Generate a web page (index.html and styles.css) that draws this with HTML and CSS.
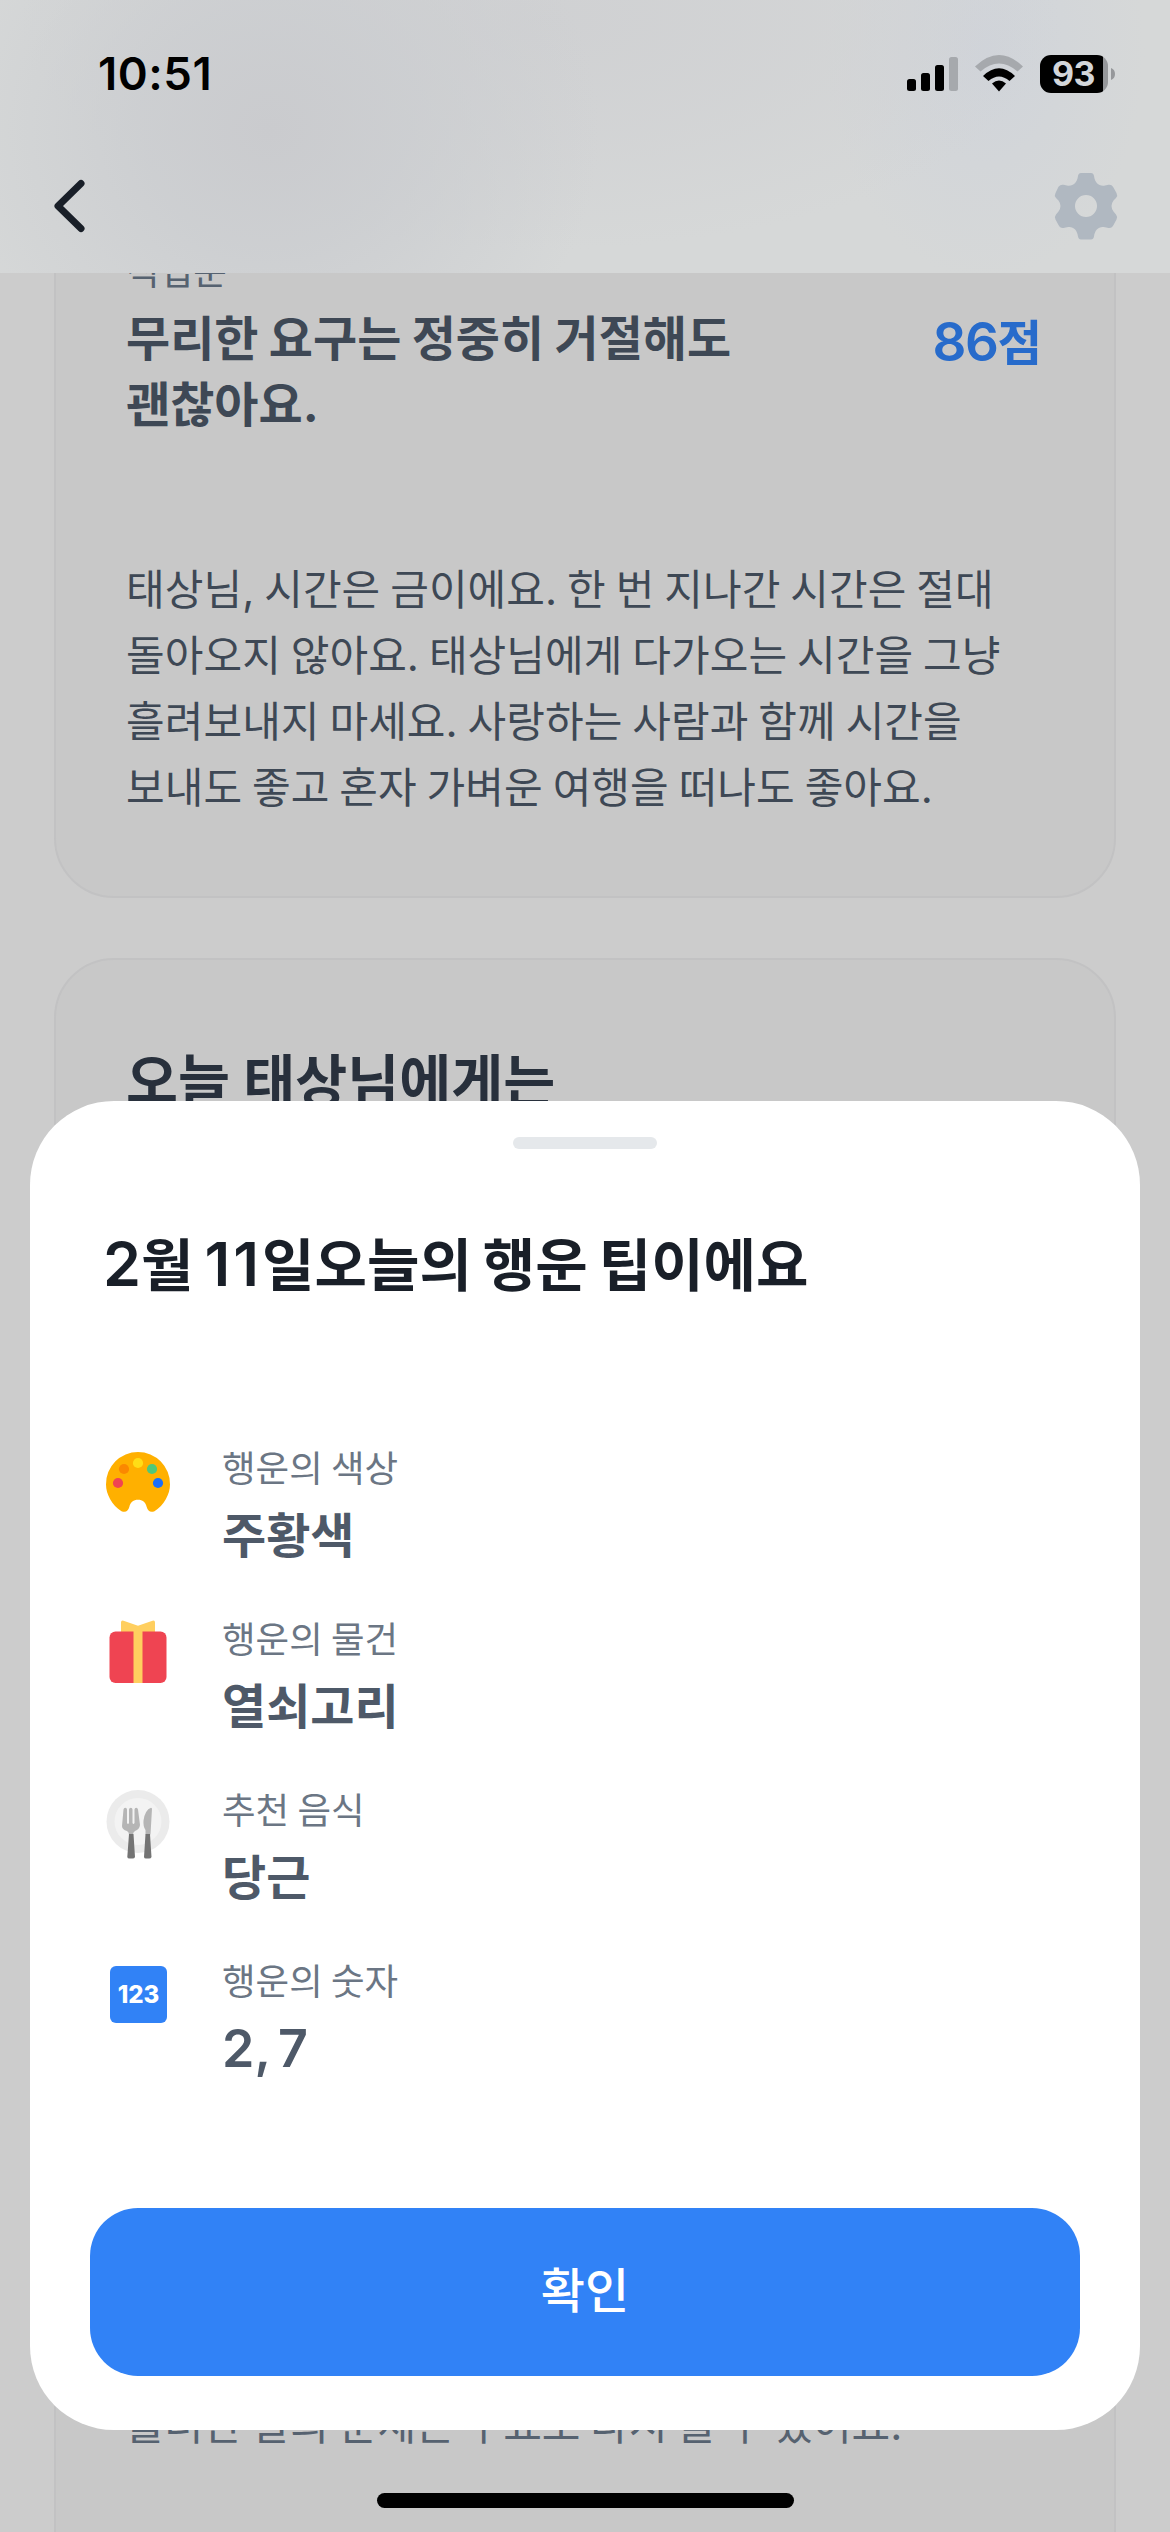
FILE: index.html
```html
<!DOCTYPE html>
<html lang="ko">
<head>
<meta charset="utf-8">
<title>오늘의 행운 팁</title>
<link rel="stylesheet" href="styles.css">
</head>
<body>
<div class="screen">
  <header class="header">
    <div class="status">
      <span class="time">10:51</span>
      <div class="indicators">
        <svg class="signal" width="51" height="38" viewBox="0 0 51 38"><rect x="0" y="24" width="9" height="12" rx="2.5"/><rect x="14" y="18" width="9" height="18" rx="2.5"/><rect x="28" y="10" width="9" height="26" rx="2.5"/><rect x="42" y="2" width="9" height="34" rx="2.5" fill="#a6a9ad"/></svg>
        <svg class="wifi" width="50" height="38" viewBox="0 0 50 38"><path d="M1 11.500Q25-11.500 49 11.500L43.500 16.500Q25 .5 6.500 16.500Z" fill="#a6a9ad"/><path d="M9 21Q25 5.500 41 21L35.500 26Q25 17 14.500 26Z"/><path d="M18 28.500Q25 22.500 32 28.500L25 36.500Z"/></svg>
        <div class="battery"><span class="level">93</span></div>
        <svg class="cap" width="5" height="12" viewBox="0 0 5 12"><path d="M0 0Q4 1.500 4 6T0 12Z" fill="#96989b"/></svg>
      </div>
    </div>
    <div class="nav">
      <svg class="back" width="32" height="60" viewBox="0 0 32 60"><path d="M28 7.500 5 30 28 52.500" fill="none" stroke="#191f28" stroke-width="7" stroke-linecap="round" stroke-linejoin="round"/></svg>
      <svg class="gear" width="64" height="68" viewBox="0 0 64 68"><path fill-rule="evenodd" d="M27 1H37Q39.500 1 40 4C41 11 45 14.500 51 13.500L54.500 12.800Q57.500 12.200 59 14.800L62.500 21Q64 23.500 62 26L59.500 28.500Q55.500 34 59.500 39.500L62 42.500Q64 45 62.500 47.500L59.500 53Q58 56.500 54.500 56L51 55.300C45 54 41 57.500 40 64.500Q39.500 67.500 37 67.500H27Q24.500 67.500 24 64.500C23 57.500 19 54 13 55.300L9.500 56Q6 56.500 4.500 53L1.500 47.500Q0 45 2 42.500L4.500 39.500Q8.500 34 4.500 28.500L2 26Q0 23.500 1.500 21L4.500 14.800Q6.500 12.200 9.500 12.800L13 13.500C19 14.500 23 11 24 4Q24.500 1 27 1ZM32 23A11 11 0 1 0 32 45A11 11 0 1 0 32 23Z" fill="#b0b8c1"/></svg>
    </div>
  </header>
  <main class="content">
    <section class="card card-work">
      <p class="card-label">직업운</p>
      <div class="card-head">
        <h2 class="card-title">무리한 요구는 정중히 거절해도<br>괜찮아요.</h2>
        <span class="score"><span class="score-num">86</span>점</span>
      </div>
      <p class="card-body">태상님, 시간은 금이에요. 한 번 지나간 시간은 절대<br>돌아오지 않아요. 태상님에게 다가오는 시간을 그냥<br>흘려보내지 마세요. 사랑하는 사람과 함께 시간을<br>보내도 좋고 혼자 가벼운 여행을 떠나도 좋아요.</p>
    </section>
    <section class="card card-today">
      <h2 class="today-title">오늘 태상님에게는</h2>
      <p class="notice">흘러간 날의 운세는 무료로 다시 볼 수 있어요.</p>
    </section>
  </main>
  <div class="sheet">
    <div class="handle"></div>
    <h1 class="sheet-title"><span class="num">2</span>월 <span class="num day">11</span>일오늘의 행운 팁이에요</h1>
    <ul class="tips">
      <li class="tip">
        <svg class="tip-icon" width="66" height="72" viewBox="0 0 66 72"><path d="M33 2A32 32 0 0 1 65 34.500C65 44 59 55.500 49.500 61.200Q43.500 63.500 41.700 57C40.500 52 37.500 49.800 33 49.800S25.500 52 24.300 57Q22.500 63.500 16.500 61.200C7 55.500 1 44 1 34.500A32 32 0 0 1 33 2Z" fill="#ffb000"/><circle cx="13" cy="33" r="5.100" fill="#f04452"/><circle cx="19" cy="19" r="5.100" fill="#fb8800"/><circle cx="33" cy="13" r="5.100" fill="#ffdd16"/><circle cx="47" cy="19" r="5.100" fill="#50c878"/><circle cx="53" cy="33" r="5.100" fill="#1b6ef9"/></svg>
        <div class="tip-text"><span class="tip-label">행운의 색상</span><strong class="tip-value">주황색</strong></div>
      </li>
      <li class="tip">
        <svg class="tip-icon" width="66" height="72" viewBox="0 0 66 72"><path d="M16 11V1.500Q16-1 18.500-.3L33 4.800 47.500-.3Q50-1 50 1.500V11Z" fill="#ffcf5f"/><rect x="4.500" y="10.500" width="57" height="51.500" rx="6" fill="#ef4452"/><path d="M28.500 10H37.500V62H28.500Z" fill="#ffcf5f"/></svg>
        <div class="tip-text"><span class="tip-label">행운의 물건</span><strong class="tip-value">열쇠고리</strong></div>
      </li>
      <li class="tip">
        <svg class="tip-icon" width="66" height="72" viewBox="0 2.500 66 72"><circle cx="33" cy="32" r="31.500" fill="#ebebeb"/><circle cx="33" cy="32" r="23.500" fill="#f3f3f3"/><path d="M18.500 20Q18.700 18.300 20.300 18.300T22 20V33.500Q23 35.500 24 33.500V20Q24.200 18.300 25.800 18.300T27.500 20V33.500Q28.500 35.500 29.500 33.500V20Q29.700 18.300 31.200 18.300T33 20L35 35.500Q34.500 40 30 41.500Q28 42.500 28 45H24Q24 42.500 22 41.500Q17 40 17 36.500Z" fill="#b5b5b5"/><path d="M47 19L45.500 45H40.500V40.500Q38 37 38.500 31Q40 20.500 46 18.300Z" fill="#b5b5b5"/><path d="M24 44.500H28.500L30 67.500Q29.500 69 27.500 69H24.500Q22.500 69 22.300 67.500ZM40.500 44.500H45L46.500 67.500Q46 69 44 69H41Q39.200 69 39 67.500Z" fill="#747474"/></svg>
        <div class="tip-text"><span class="tip-label">추천 음식</span><strong class="tip-value">당근</strong></div>
      </li>
      <li class="tip">
        <div class="number-icon">123</div>
        <div class="tip-text"><span class="tip-label">행운의 숫자</span><strong class="tip-value tip-number">2, 7</strong></div>
      </li>
    </ul>
    <button class="confirm">확인</button>
  </div>
  <div class="home"></div>
</div>
</body>
</html>
```

FILE: styles.css
```css
* { box-sizing: border-box; margin: 0; padding: 0; }
body { font-family: Inter, "Noto Sans CJK KR", sans-serif; background: #ccc; }
h1, h2, p, span, strong, button { white-space: nowrap; }
.screen { position: relative; width: 1170px; height: 2532px; overflow: hidden; display: flex; flex-direction: column; background: #ccc; }

.header {
  height: 273px; flex: none;
  background:
    radial-gradient(ellipse 330px 300px at 270px 130px, #cacbce 0%, rgba(203,205,208,.8) 40%, rgba(210,211,213,0) 100%),
    radial-gradient(ellipse 520px 230px at 540px 20px, rgba(207,208,210,.9) 0%, rgba(208,209,211,.6) 50%, rgba(210,211,213,0) 100%),
    radial-gradient(ellipse 160px 230px at 985px 50px, #d0d4da 0%, rgba(209,213,218,0) 100%),
    #d6d8d8;
}
.status { height: 148px; padding: 0 54px 0 98px; display: flex; justify-content: space-between; align-items: center; }
.time { font-size: 45.500px; font-weight: 600; line-height: 54px; letter-spacing: .5px; color: #000; }
.indicators { display: flex; align-items: center; }
.wifi { margin-left: 16px; }
.battery { margin-left: 16px; width: 68px; height: 38px; border-radius: 11px; background: linear-gradient(90deg, #000 63px, #96989b 63px); padding-left: 12px; }
.level { display: block; font-size: 34px; font-weight: 700; line-height: 38px; color: #d3d6da; letter-spacing: -.5px; }
.cap { margin-left: 3px; }
.nav { height: 116px; padding: 0 52px 0 53px; display: flex; justify-content: space-between; align-items: center; }

.content { height: 2259px; overflow: hidden; padding: 0 54px; display: flex; flex-direction: column; gap: 60px; }
.card { background: #c8c8c8; border: 2px solid #c2c2c3; border-radius: 60px; padding: 0 72px 0 70px; flex: none; }
.card-work { height: 735px; margin-top: -110px; padding-top: 82px; }
.card-label { font-size: 36.500px; line-height: 50px; color: #566270; }
.card-head { margin-top: 9px; display: flex; justify-content: space-between; align-items: flex-start; }
.card-title { font-size: 48px; font-weight: 700; line-height: 66px; word-spacing: -1px; color: #3e4855; }
.score { font-size: 48.500px; font-weight: 600; line-height: 72px; color: #276bcb; }
.score-num { font-size: 53px; letter-spacing: -1.500px; }
.card-body { margin-top: 119px; font-size: 42px; line-height: 66px; word-spacing: -2px; letter-spacing: .07px; color: #3e4855; }
.card-today { height: 1700px; padding-top: 84px; display: flex; flex-direction: column; }
.today-title { font-size: 56.500px; font-weight: 700; line-height: 76px; color: #28303c; }
.notice { margin-top: 1278px; font-size: 42px; line-height: 54px; word-spacing: -2px; color: #566270; }

.sheet { position: absolute; left: 30px; top: 1101px; width: 1110px; height: 1329px; border-radius: 84px; background: #fff; padding: 36px 60px 54px; display: flex; flex-direction: column; }
.handle { align-self: center; width: 144px; height: 12px; border-radius: 6px; background: #e5e8eb; }
.sheet-title { margin: 79px 0 0 13px; height: 75px; font-size: 57px; font-weight: 700; line-height: 76px; word-spacing: -2.500px; color: #191f28; }
.num { font-size: 61px; font-weight: 600; line-height: 1; }
.day { letter-spacing: 3px; }
.tips { list-style: none; margin: 139px 0 0 15px; }
.tip { height: 171px; display: flex; }
.tip-icon { margin-top: 8px; flex: none; overflow: visible; }
.number-icon { width: 57px; height: 57px; margin: 11px 4px 0 5px; border-radius: 6px; background: #3182f6; color: #fff; font-size: 24px; font-weight: 800; line-height: 57px; text-align: center; }
.tip-text { margin-left: 51px; display: flex; flex-direction: column; }
.tip-label { font-size: 36.500px; line-height: 54px; word-spacing: -2px; color: #6b7684; }
.tip-value { margin-top: 4px; font-size: 48px; font-weight: 700; line-height: 72px; color: #4e5968; }
.tip-number { font-size: 52px; font-weight: 600; word-spacing: -5px; }
.confirm { margin-top: auto; height: 168px; flex: none; border: 0; border-radius: 48px; background: #3182f6; color: #fff; font: 500 48px/66px Inter, "Noto Sans CJK KR", sans-serif; padding-bottom: 3px; }
.home { position: absolute; left: 377px; top: 2493px; width: 417px; height: 15px; border-radius: 8px; background: #000; }
```
